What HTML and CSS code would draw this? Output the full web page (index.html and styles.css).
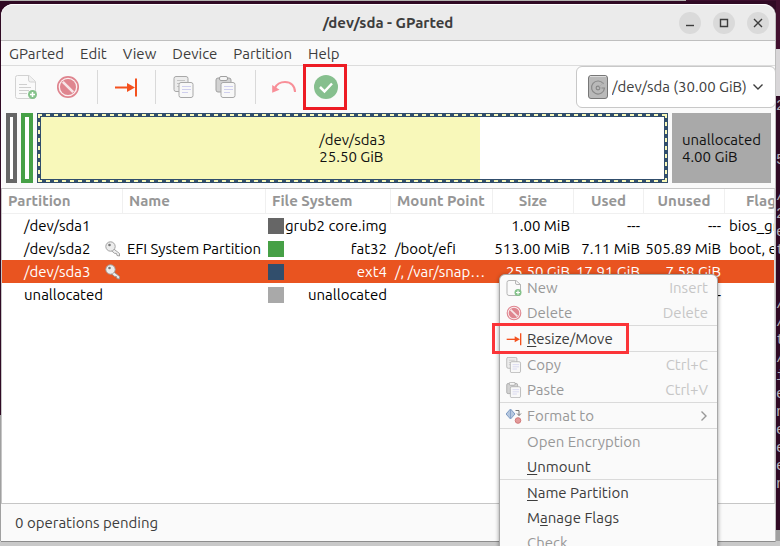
FILE: index.html
```html
<!DOCTYPE html>
<html lang="en">
<head>
<meta charset="utf-8">
<title>/dev/sda - GParted</title>
<link rel="stylesheet" href="styles.css">
</head>
<body>
<svg class="defs" aria-hidden="true">
  <symbol id="i-new" viewBox="0 0 24 24">
    <path d="M3.500.5H15l6.500 6v15q0 2-2 2h-16q-2 0-2-2v-19q0-2 2-2z" fill="#fafafa" stroke="#d2d2d2"/>
    <path d="M14.500.5v4.500q0 2 2 2h4.500" fill="#f1f1f1" stroke="#d2d2d2"/>
    <path class="lines" d="M5 9.500h8M5 12.500h12M5 15.500h10M5 18.500h8" stroke="#cfcfcf"/>
    <circle cx="18.500" cy="19.500" r="4.500" fill="#85c28b"/>
    <path d="M18.500 17v5M16 19.500h5" stroke="#fff" stroke-width="1.500"/>
  </symbol>
  <symbol id="i-newsmall" viewBox="0 0 16 16">
    <path d="M3 .5h7l4.500 4v9q0 2-2 2H3q-2 0-2-2v-11q0-2 2-2z" fill="#fafafa" stroke="#b5b5b5"/>
    <path d="M9.500.5v2.500q0 1.500 1.500 1.500h3.500" fill="none" stroke="#b5b5b5"/>
    <circle cx="12" cy="12.500" r="3.500" fill="#85c28b"/>
    <path d="M12 10.500v4M10 12.500h4" stroke="#fff" stroke-width="1.200"/>
  </symbol>
  <symbol id="i-delete" viewBox="0 0 24 24">
    <circle cx="12" cy="12" r="10.200" fill="#fbeff0" stroke="#df858f" stroke-width="1.700"/>
    <circle cx="12" cy="12" r="8" fill="#df858f"/>
    <path d="M6.800 6.800l10.400 10.400" stroke="#f7e6e8" stroke-width="2.600"/>
  </symbol>
  <symbol id="i-move" viewBox="0 0 24 20">
    <path d="M1 10.500h14" stroke="#f4511e" stroke-width="2"/>
    <path d="M13 6l8 4.500-8 4.500z" fill="#f4511e"/>
    <path d="M22 1.500v18" stroke="#f4511e" stroke-width="2"/>
  </symbol>
  <symbol id="i-copy" viewBox="0 0 22 22">
    <rect x="1" y=".5" width="14" height="15" rx="2" fill="#ececec" stroke="#a8a8a8"/>
    <path d="M4 4.500h8M4 7.500h4M4 10.500h4" stroke="#c4c4c4"/>
    <rect x="6" y="6.500" width="14" height="15" rx="2" fill="#f8f8f8" stroke="#a8a8a8"/>
    <path d="M9 10.500h9M9 13.500h9M9 16.500h6" stroke="#cfcfee"/>
  </symbol>
  <symbol id="i-paste" viewBox="0 0 22 22">
    <rect x="1" y="2" width="15" height="14" rx="2" fill="#d2d2d2" stroke="#a0a0a0"/>
    <rect x="4.500" y=".5" width="8" height="4" rx="1.500" fill="#f5f5f5" stroke="#a0a0a0"/>
    <rect x="6" y="6.500" width="14" height="15" rx="2" fill="#f8f8f8" stroke="#a8a8a8"/>
    <path d="M9 10.500h9M9 13.500h9M9 16.500h6" stroke="#cfcfee"/>
  </symbol>
  <symbol id="i-undo" viewBox="0 0 26 14">
    <path d="M4 8C6 3.500 10 2 14 2c6 0 10 4 10 10" fill="none" stroke="#f88f98" stroke-width="2"/>
    <path d="M1.200 5v7.800l7.300-3z" fill="#f88f98"/>
  </symbol>
  <symbol id="i-apply" viewBox="0 0 24 24">
    <circle cx="12" cy="12" r="12" fill="#86bf8e"/>
    <path d="M6 12l4.500 4.500L18 8.500" fill="none" stroke="#fff" stroke-width="2.500"/>
  </symbol>
  <symbol id="i-disk" viewBox="0 0 20 24">
    <rect x=".5" y=".5" width="19" height="23" rx="2.500" fill="#b9b9b9" stroke="#777"/>
    <path d="M2 1.500h16" stroke="#dcdcdc"/>
    <path d="M15.500 9A6.500 6.500 0 1 0 16.500 13h-3" fill="none" stroke="#8a8a8a" stroke-width="1.200"/>
    <circle cx="10" cy="13" r="1.900" fill="none" stroke="#858585" stroke-width="1.100"/>
    <path d="M10 13l6-6" stroke="#aaa" stroke-width=".7"/>
  </symbol>
  <symbol id="i-key" viewBox="0 0 16 16">
    <path d="M7.500 7l7 5.500v2.500l-2.500-.5-.5-2-2-.2-3.500-3z" fill="#eee" stroke="#999" stroke-width=".9"/>
    <circle cx="5.500" cy="5.500" r="4.700" fill="#ececec" stroke="#999" stroke-width=".9"/>
    <circle cx="4.500" cy="4" r="1.300" fill="#777"/>
  </symbol>
  <symbol id="i-format" viewBox="0 0 16 16">
    <path d="M4.500 1L9 6l-4.500 5L0 6z" fill="#b5c7df" stroke="#7f9cc4"/>
    <path d="M4.500 1v10" stroke="#8aa4c8"/>
    <path d="M9.500 2.500h3.500v5M11 5.500l2 2 2-2" fill="none" stroke="#777"/>
    <circle cx="12" cy="12.500" r="2.800" fill="#e39a9a" stroke="#d27a7a"/>
  </symbol>
</svg>

<div class="backdrop" aria-hidden="true">
  <div class="strip"><pre class="terminal">2


5

/
2
e
t


/
/
t
/
i
e
n
e
e
e
n</pre></div>
</div>

<main class="window">
  <header class="titlebar">
    <h1>/dev/sda - GParted</h1>
    <div class="controls">
      <button aria-label="Minimize"><svg viewBox="0 0 22 22"><path d="M7 13.500h8"/></svg></button>
      <button aria-label="Maximize"><svg viewBox="0 0 22 22"><path d="M7.500 7.500h7v7h-7z"/></svg></button>
      <button aria-label="Close"><svg viewBox="0 0 22 22"><path d="M7 7l8 8M15 7l-8 8"/></svg></button>
    </div>
  </header>

  <nav class="menubar">
    <button>GParted</button><button>Edit</button><button>View</button><button>Device</button><button>Partition</button><button>Help</button>
  </nav>

  <div class="toolbar">
    <button class="tool" aria-label="New"><svg class="i24"><use href="#i-new"/></svg></button>
    <button class="tool" aria-label="Delete"><svg class="i24"><use href="#i-delete"/></svg></button>
    <span class="divider"></span>
    <button class="tool" aria-label="Resize/Move"><svg class="i-wide"><use href="#i-move"/></svg></button>
    <span class="divider"></span>
    <button class="tool" aria-label="Copy"><svg class="i22"><use href="#i-copy"/></svg></button>
    <button class="tool" aria-label="Paste"><svg class="i22"><use href="#i-paste"/></svg></button>
    <span class="divider"></span>
    <button class="tool" aria-label="Undo"><svg class="i-undo"><use href="#i-undo"/></svg></button>
    <button class="tool marked" aria-label="Apply"><svg class="i24"><use href="#i-apply"/></svg></button>
    <div class="device">
      <svg class="i-disk" aria-hidden="true"><use href="#i-disk"/></svg>
      <select aria-label="Device"><option>/dev/sda (30.00 GiB)</option></select>
      <svg class="chevron" viewBox="0 0 12 8" aria-hidden="true"><path d="M1.500 1.500L6 6l4.500-4.500"/></svg>
    </div>
  </div>

  <section class="disk" aria-label="Disk layout">
    <div class="part sda1"></div>
    <div class="part sda2"></div>
    <div class="part sda3"><div class="used"></div><p>/dev/sda3<br>25.50 GiB</p></div>
    <div class="part free"><p>unallocated<br>4.00 GiB</p></div>
  </section>

  <div class="list">
    <table>
      <colgroup><col class="c-part"><col class="c-name"><col class="c-fs"><col class="c-mount"><col class="c-size"><col class="c-used"><col class="c-size"><col class="c-flags"></colgroup>
      <thead>
        <tr><th>Partition</th><th>Name</th><th>File System</th><th>Mount Point</th><th class="mid">Size</th><th class="mid">Used</th><th class="mid">Unused</th><th class="mid">Flags</th></tr>
      </thead>
      <tbody>
        <tr><td><div class="dev">/dev/sda1</div></td><td></td><td><div class="fs grub">grub2 core.img</div></td><td></td><td class="num">1.00 MiB</td><td class="num">---</td><td class="num">---</td><td>bios_grub</td></tr>
        <tr><td><div class="dev">/dev/sda2<svg class="i16"><use href="#i-key"/></svg></div></td><td>EFI System Partition</td><td><div class="fs fat">fat32</div></td><td>/boot/efi</td><td class="num">513.00 MiB</td><td class="num">7.11 MiB</td><td class="num">505.89 MiB</td><td>boot, esp</td></tr>
        <tr class="selected"><td><div class="dev">/dev/sda3<svg class="i16"><use href="#i-key"/></svg></div></td><td></td><td><div class="fs ext">ext4</div></td><td>/, /var/snap…</td><td class="num">25.50 GiB</td><td class="num">17.91 GiB</td><td class="num">7.58 GiB</td><td></td></tr>
        <tr><td><div class="dev">unallocated</div></td><td></td><td><div class="fs none">unallocated</div></td><td></td><td class="num">4.00 GiB</td><td class="num">---</td><td class="num">---</td><td></td></tr>
      </tbody>
    </table>
  </div>

  <footer class="status">0 operations pending</footer>

  <div class="context" role="menu">
    <button role="menuitem" disabled><svg class="i16"><use href="#i-newsmall"/></svg><span>New</span><kbd>Insert</kbd></button>
    <button role="menuitem" disabled><svg class="i16"><use href="#i-delete"/></svg><span>Delete</span><kbd>Delete</kbd></button>
    <hr>
    <button role="menuitem" class="marked"><svg class="i16"><use href="#i-move"/></svg><span><u>R</u>esize/Move</span></button>
    <hr>
    <button role="menuitem" disabled><svg class="i16"><use href="#i-copy"/></svg><span>Copy</span><kbd>Ctrl+C</kbd></button>
    <button role="menuitem" disabled><svg class="i16"><use href="#i-paste"/></svg><span>Paste</span><kbd>Ctrl+V</kbd></button>
    <hr>
    <button role="menuitem" disabled><svg class="i16"><use href="#i-format"/></svg><span>Format to</span><svg class="more" viewBox="0 0 8 12"><path d="M1.500 1.500L6 6l-4.500 4.500"/></svg></button>
    <hr>
    <button role="menuitem" disabled><i></i><span>Open Encryption</span></button>
    <button role="menuitem"><i></i><span><u>U</u>nmount</span></button>
    <hr>
    <button role="menuitem"><i></i><span><u>N</u>ame Partition</span></button>
    <button role="menuitem"><i></i><span>M<u>a</u>nage Flags</span></button>
    <button role="menuitem" disabled><i></i><span>Check</span></button>
  </div>
</main>
</body>
</html>
```
FILE: styles.css
```css
* { box-sizing: border-box; }

body {
  margin: 0;
  height: 100vh;
  padding: 4px 4px 4px 1px;
  display: flex;
  overflow: hidden;
  position: relative;
  font: 15px/18px Ubuntu, "Noto Sans", sans-serif;
  color: #3d3d3d;
  background: linear-gradient(#300a24 0 415px, #a0a0a0 415px);
}

button, select, kbd { font: inherit; color: inherit; }
button { border: 0; padding: 0; background: none; }
h1, p, hr { margin: 0; }
svg { flex: none; display: block; }

.defs { position: absolute; width: 0; height: 0; }
.i24 { width: 24px; height: 24px; }
.i22 { width: 22px; height: 22px; }
.i16 { width: 16px; height: 16px; }
.i-wide { width: 24px; height: 20px; }
.i-undo { width: 26px; height: 14px; }
.i-disk { width: 20px; height: 24px; }

/* desktop behind the window */
.backdrop {
  position: absolute;
  inset: 0;
  border-bottom: 5px solid #c9c9c9;
  background: linear-gradient(90deg, #b4b4b0 88%, #3c0f2d 88%) top / 100% 1px no-repeat;
}
.strip {
  position: absolute;
  top: 0;
  right: 0;
  width: 4px;
  height: 530px;
  padding-top: 98px;
  overflow: hidden;
  background: linear-gradient(#42102f 0 49px, #d8d6d8 49px 96px, #300a24 96px);
}
.terminal {
  margin: 0;
  font: 15px/18px "Liberation Mono", monospace;
  color: #b8b2b8;
}

.window {
  position: relative;
  flex: 1;
  min-width: 0;
  display: flex;
  flex-direction: column;
  background: #fafafa;
  border-right: 1px solid #bdbdbd;
  border-bottom: 1px solid #8d8d8d;
  border-radius: 12px 12px 0 0;
}

.titlebar {
  display: grid;
  grid-template-columns: 1fr auto 1fr;
  align-items: center;
  height: 37px;
  padding: 0 6px;
  background: #ebebeb;
  border-top: 1px solid #fff;
  border-bottom: 1px solid #bfbfbf;
  border-radius: 12px 12px 0 0;
}
.titlebar h1 { grid-column: 2; font-size: 15px; line-height: 20px; }
.controls { display: flex; gap: 12px; justify-content: flex-end; }
.controls button { width: 22px; height: 22px; border-radius: 50%; background: #dadada; }
.controls path { fill: none; stroke: #3d3d3d; stroke-width: 1.4; }

.menubar {
  display: flex;
  gap: 16px;
  height: 25px;
  padding: 2px 8px 0;
  border-bottom: 1px solid #dcdcdc;
}

.toolbar {
  display: flex;
  align-items: center;
  height: 42px;
  padding-left: 4px;
}
.tool {
  position: relative;
  width: 42px;
  height: 42px;
  display: grid;
  place-items: center;
}
.divider { width: 1px; height: 34px; margin: 0 7px 0 8px; background: #d9d9d9; }
.tool.marked::after {
  content: "";
  position: absolute;
  inset: -2px 0 -2px -2px;
  border: 3px solid #ed1c24;
}
.device {
  display: flex;
  align-items: center;
  gap: 4px;
  width: 200px;
  height: 42px;
  margin: 0 -1px 0 auto;
  padding: 0 11px;
  background: #fff;
  border: 1px solid #c8c8c8;
  border-radius: 6px;
}
.device select { flex: 1; min-width: 0; padding: 0; border: 0; background: none; appearance: none; }
.chevron { width: 12px; height: 8px; }
.chevron path, .more path { fill: none; stroke: currentColor; stroke-width: 1.4; }

.disk {
  display: flex;
  gap: 4px;
  height: 80px;
  padding: 5px 4px 5px 5px;
  line-height: 17px;
  color: #111;
}
.part { position: relative; display: grid; place-items: center; border: 4px solid; background: #fff; }
.part p { position: relative; }
.sda1 { width: 11px; border-color: #666; }
.sda2 { width: 12px; border-color: #46a046; }
.sda3 { flex: 1; border-color: #314e6c; }
.sda3::before {
  content: "";
  position: absolute;
  inset: -3px;
  background:
    repeating-linear-gradient(90deg, #f8f8ba 0 4px, transparent 4px 8px) top / 100% 2px no-repeat,
    repeating-linear-gradient(90deg, #f8f8ba 0 4px, transparent 4px 8px) bottom / 100% 2px no-repeat,
    repeating-linear-gradient(#f8f8ba 0 4px, transparent 4px 8px) left / 2px 100% no-repeat,
    repeating-linear-gradient(#f8f8ba 0 4px, transparent 4px 8px) right / 2px 100% no-repeat;
}
.used { position: absolute; inset: 0 auto 0 0; width: 70.4%; background: #f8f8ba; }
.free { width: 99px; border: 0; background: #a9a9a9; }

.list {
  flex: 1;
  min-height: 0;
  overflow: hidden;
  background: #fff;
  border: 1px solid #c6c6c6;
  border-right-color: #ddd;
}
table {
  width: 100%;
  min-width: 803px;
  table-layout: fixed;
  border-collapse: separate;
  border-spacing: 0;
  color: #000;
}
.c-part { width: 121px; }
.c-name { width: 143px; }
.c-fs { width: 125px; }
.c-mount { width: 102px; }
.c-size { width: 81px; }
.c-used { width: 70px; }
.c-flags { width: 80px; }
th {
  height: 25px;
  padding: 0 6px;
  text-align: left;
  color: #969696;
  white-space: nowrap;
  border-right: 1px solid #f0f0f0;
  border-bottom: 1px solid #f0f0f0;
}
th.mid { text-align: center; padding: 0; }
td { height: 23px; padding: 0 4px; white-space: nowrap; }
td.num { text-align: right; padding-left: 0; }
.dev { display: flex; justify-content: space-between; align-items: center; padding-left: 18px; margin-right: -2px; }
.fs { display: flex; justify-content: space-between; align-items: center; margin-left: -2px; }
.fs::before { content: ""; width: 16px; height: 16px; background: currentColor; }
.fs.grub::before { background: #666; }
.fs.fat::before { background: #46a046; }
.fs.ext::before { background: #314e6c; }
.fs.none::before { background: #a9a9a9; }
.selected { color: #fff; background: #e95420; }

.status { height: 37px; padding: 10px 14px; }

.context {
  position: absolute;
  top: 270px;
  left: 498px;
  width: 219px;
  background: #fafafa;
  border: 1px solid #a8a8a8;
  border-radius: 6px;
  box-shadow: 0 1px 4px #0006;
}
.context button {
  position: relative;
  display: flex;
  align-items: center;
  gap: 5px;
  width: 100%;
  height: 25px;
  padding: 0 9px 0 6px;
  text-align: left;
}
.context button:disabled { color: #989898; }
.context hr { border: 0; height: 1px; background: #dadada; }
.context span { flex: 1; }
.context i { width: 16px; }
.context kbd { color: #c6c6c6; }
.context u { text-underline-offset: 2px; }
.more { width: 8px; height: 12px; }
.context .marked::after {
  content: "";
  position: absolute;
  inset: -3px 88px -3px -8px;
  border: 3px solid #fb3438;
}
```
